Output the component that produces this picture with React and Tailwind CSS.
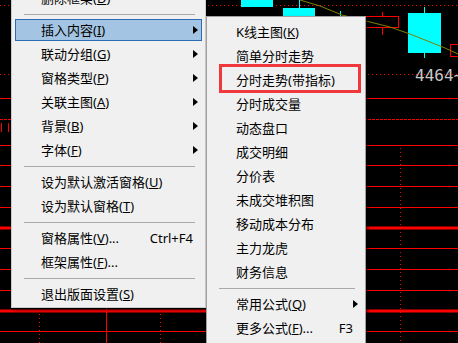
import React from "react";

const mainMenu = [
  { label: "删除框架", hot: "D" },
  { sep: true },
  { label: "插入内容", hot: "I", arrow: true, active: true },
  { label: "联动分组", hot: "G", arrow: true },
  { label: "窗格类型", hot: "P", arrow: true },
  { label: "关联主图", hot: "A", arrow: true },
  { label: "背景", hot: "B", arrow: true },
  { label: "字体", hot: "F", arrow: true },
  { sep: true },
  { label: "设为默认激活窗格", hot: "U" },
  { label: "设为默认窗格", hot: "T" },
  { sep: true },
  { label: "窗格属性", hot: "V", tail: "...", shortcut: "Ctrl+F4" },
  { label: "框架属性", hot: "F", tail: "..." },
  { sep: true },
  { label: "退出版面设置", hot: "S" },
];

const subMenu = [
  { label: "K线主图", hot: "K" },
  { label: "简单分时走势" },
  { label: "分时走势(带指标)" },
  { label: "分时成交量" },
  { label: "动态盘口" },
  { label: "成交明细" },
  { label: "分价表" },
  { label: "未成交堆积图" },
  { label: "移动成本分布" },
  { label: "主力龙虎" },
  { label: "财务信息" },
  { sep: true },
  { label: "常用公式", hot: "Q", arrow: true },
  { label: "更多公式", hot: "F", tail: "...", shortcut: "F3" },
];

function MenuRow({ item }) {
  if (item.sep) {
    return (
      <div className="h-[8px] flex items-center ml-[12px] mr-[10px]">
        <div className="h-px w-full bg-[#a9a9a9]" />
      </div>
    );
  }
  return (
    <div className="h-[24px] px-[3px] py-[1px]">
      <div
        className={
          "h-full flex items-center border pl-[25px] pr-[2px] " +
          (item.active ? "bg-[#a3c4e2] border-[#2b6db4]" : "border-transparent")
        }
      >
        <span className="flex-1 whitespace-nowrap">
          {item.label}
          {item.hot && (
            <>
              (<u>{item.hot}</u>)
            </>
          )}
          {item.tail}
        </span>
        {item.shortcut && <span className="pr-[6px]">{item.shortcut}</span>}
        {item.arrow && (
          <span className="w-0 h-0 border-y-[4px] border-y-transparent border-l-[5px] border-l-black mr-[1px]" />
        )}
      </div>
    </div>
  );
}

function Chart() {
  const solid = [98, 145, 165, 186, 207, 248, 269, 290, 331];
  return (
    <svg width="458" height="343" className="block">
      <line x1="0" y1="5.5" x2="458" y2="5.5" stroke="#ff0000" strokeDasharray="1 3" />
      <line x1="0" y1="74.5" x2="458" y2="74.5" stroke="#ff0000" strokeDasharray="1 3" />
      <line x1="0" y1="119.5" x2="458" y2="119.5" stroke="#ff0000" strokeDasharray="3 1" />
      {solid.map((y) => (
        <line key={y} x1="0" y1={y + 0.5} x2="458" y2={y + 0.5} stroke="#ff0000" />
      ))}
      <line x1="0" y1="228" x2="458" y2="228" stroke="#ff0000" strokeWidth="3" />
      <line x1="0" y1="311" x2="458" y2="311" stroke="#ff0000" strokeWidth="3" />
      <line x1="106.5" y1="230" x2="106.5" y2="343" stroke="#ff0000" />
      <line x1="39.5" y1="230" x2="39.5" y2="343" stroke="#ff0000" strokeDasharray="1 3" />
      <line x1="160.5" y1="230" x2="160.5" y2="343" stroke="#ff0000" strokeDasharray="1 3" />
      <line x1="400.5" y1="148" x2="400.5" y2="343" stroke="#ff0000" strokeDasharray="1 3" />
      <line x1="1.5" y1="123" x2="1.5" y2="132" stroke="#ff0000" />
      <line x1="8.5" y1="123" x2="8.5" y2="132" stroke="#ff0000" />

      {/* candles */}
      <rect x="241" y="0" width="32" height="7" fill="#00ffff" />
      <line x1="299.5" y1="0" x2="299.5" y2="9" stroke="#00ffff" />
      <rect x="283" y="8" width="32" height="12" fill="#00ffff" />
      <line x1="340.5" y1="11" x2="340.5" y2="17" stroke="#00ffff" />
      <line x1="382.5" y1="12" x2="382.5" y2="35" stroke="#ff0000" />
      <rect x="350.5" y="16.5" width="48" height="11" fill="#000" stroke="#ff0000" />
      <line x1="424.5" y1="7" x2="424.5" y2="58" stroke="#00ffff" />
      <rect x="408" y="13" width="33" height="40" fill="#00ffff" />
      <rect x="450.5" y="44.5" width="20" height="12" fill="#000" stroke="#ff0000" />
      <polyline
        points="300,0 320,6 342,15 366,21 390,27 410,34 430,42 445,48 458,54"
        fill="none"
        stroke="#808000"
      />
      <text x="415" y="81" fontSize="16" fill="#c8c8c8" fontFamily="DejaVu Sans Mono, monospace">
        4464~
      </text>
    </svg>
  );
}

export default function App() {
  return (
    <div className="relative w-[458px] h-[343px] overflow-hidden bg-black text-[13px] leading-none text-black font-[Noto_Sans,Noto_Sans_CJK_SC,sans-serif]">
      <Chart />

      {/* main context menu */}
      <div className="absolute left-[11px] top-[-18px] w-[195px] bg-[#f0f0f0] border border-[#cccccc] pt-[3px] pb-[1px] shadow-[2px_2px_3px_rgba(0,0,0,0.55)]">
        {mainMenu.map((item, i) => (
          <MenuRow key={i} item={item} />
        ))}
      </div>

      {/* submenu */}
      <div className="absolute left-[206px] top-[16px] w-[160px] bg-[#f0f0f0] border border-[#a0a0a0] pt-[3px] pb-[3px] shadow-[2px_2px_3px_rgba(0,0,0,0.55)]">
        {subMenu.map((item, i) => (
          <MenuRow key={i} item={item} />
        ))}
      </div>

      {/* annotation box */}
      <div className="absolute left-[219px] top-[64px] w-[142px] h-[29px] border-[3px] border-[#f0373c]" />
    </div>
  );
}
